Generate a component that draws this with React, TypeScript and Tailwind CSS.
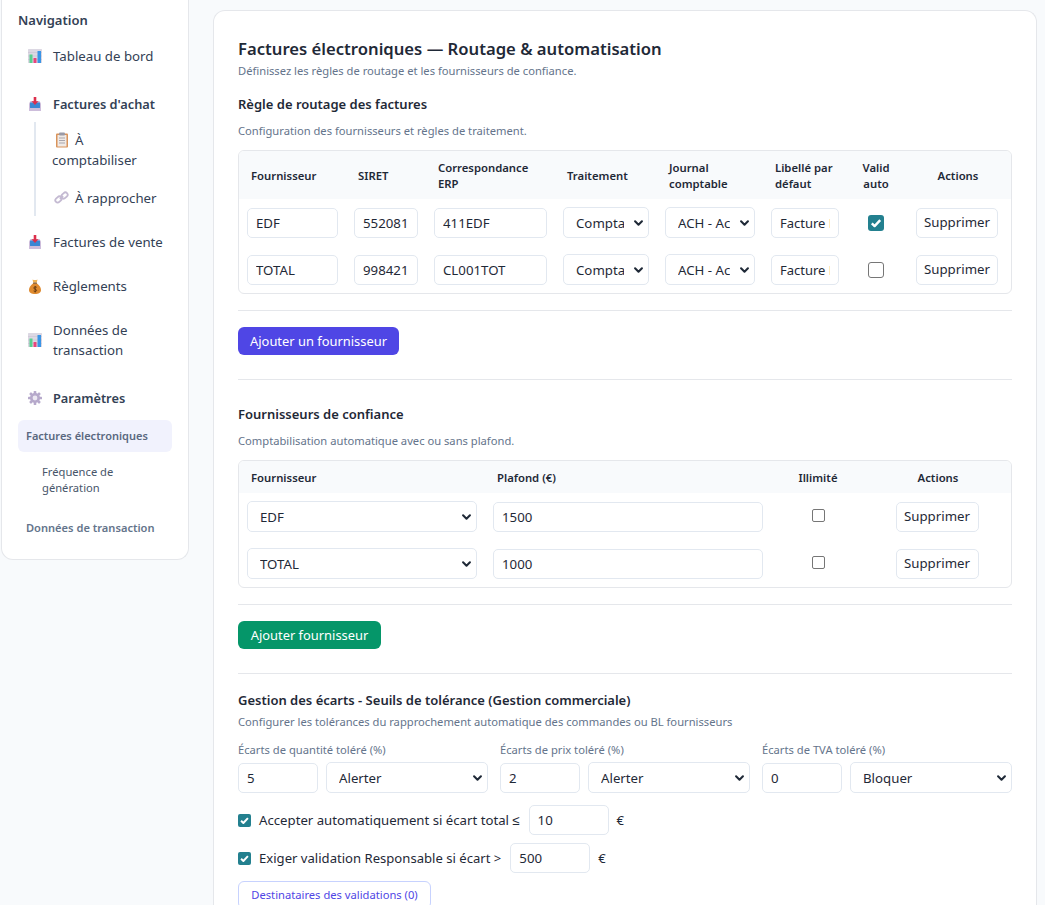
import React from "react";

const F = { fontFamily: "'Noto Sans', 'Liberation Sans', sans-serif" };

function Chev() {
  return (
    <svg className="pointer-events-none absolute right-[4px] top-1/2 -translate-y-1/2 text-[#1f2937]" width="11" height="11" viewBox="0 0 16 16" fill="none">
      <path d="M3 5.500l5 5 5-5" stroke="currentColor" strokeWidth="3" strokeLinecap="round" strokeLinejoin="round" />
    </svg>
  );
}

function Sel({ value, w }: { value: string; w: string }) {
  return (
    <div className={`relative ${w} h-[31px] shrink-0 rounded-[5px] border border-[#e2e8f0] bg-white text-[13.25px] text-[#1f2937]`}>
      <div className="ml-[12px] mr-[24px] h-full overflow-hidden whitespace-nowrap leading-[30px]">{value}</div>
      <Chev />
    </div>
  );
}

function Inp({ value, w, text = "text-[13.25px]" }: { value: string; w: string; text?: string }) {
  return (
    <div className={`${w} ${text} h-[30px] shrink-0 rounded-[5px] border border-[#e2e8f0] bg-white px-[8px] leading-[28px] text-[#1f2937]`}>
      <div className="overflow-hidden whitespace-nowrap">{value}</div>
    </div>
  );
}

function Del({ w }: { w: string }) {
  return (
    <button className={`h-[30px] ${w} rounded-[5px] border border-[#e2e8f0] bg-white pt-px text-center text-[13.25px] text-[#1f2937]`}>Supprimer</button>
  );
}

function Bars() {
  return (
    <svg width="14" height="14" viewBox="0 0 14 14" className="shrink-0">
      <rect width="14" height="14" rx="0.5" fill="#dcd8e3" />
      <path d="M0 3.500h14M0 7h14M0 10.500h14" stroke="#c8c3d2" strokeWidth="0.6" />
      <rect x="1.500" y="5.500" width="3" height="8.500" fill="#58d08f" />
      <rect x="5.500" y="9" width="3" height="5" fill="#e8447c" />
      <rect x="9.500" y="2" width="3.500" height="12" fill="#3a95e6" />
    </svg>
  );
}
function Inbox() {
  return (
    <svg width="14" height="14" viewBox="0 0 14 14" className="shrink-0">
      <path d="M1 6.500L2.500 4h9L13 6.500V14H1z" fill="#cdbddb" />
      <rect x="2" y="5.500" width="10" height="5.500" rx="0.5" fill="#3b87d4" />
      <path d="M5.700 0h2.600v4.200h2.200L7 8 3.500 4.200h2.200z" fill="#dc2f4c" />
    </svg>
  );
}
function Bag() {
  return (
    <svg width="14" height="15" viewBox="0 0 14 15" className="shrink-0">
      <path d="M5 4.500C2.500 6.500 1 8.500 1 11c0 2.800 2.500 4 6 4s6-1.200 6-4c0-2.500-1.500-4.500-4-6.500z" fill="#de8a2f" />
      <path d="M4.500 0.500C6 1.200 8 1.200 9.500 0.500L8.800 3.500H5.200z" fill="#f0b556" />
      <rect x="5" y="3.500" width="4" height="1.300" rx="0.500" fill="#7d5226" />
      <path d="M8.700 8.300C8 7.600 5.800 7.600 5.800 9c0 1.500 2.800.9 2.800 2.400 0 1.300-2.300 1.300-3 .5M7.200 7v6.500" fill="none" stroke="#5e3510" strokeWidth="0.9" />
    </svg>
  );
}
function Gear() {
  return (
    <svg width="16" height="16" viewBox="0 0 16 16" className="-ml-px shrink-0">
      <g fill="#b6a9cb">
        <circle cx="8" cy="8" r="5" />
        {[0, 45, 90, 135].map((a) => (
          <rect key={a} x="6.700" y="1" width="2.600" height="14" rx="0.600" transform={`rotate(${a} 8 8)`} />
        ))}
      </g>
      <circle cx="8" cy="8" r="2.400" fill="#ece8f2" />
    </svg>
  );
}
function Clip() {
  return (
    <svg width="14" height="16" viewBox="0 0 14 16" className="inline-block align-[-3px]">
      <rect x="1" y="1.500" width="12" height="14" rx="1" fill="#d9935a" />
      <rect x="2.500" y="3" width="9" height="11.500" fill="#f0eae6" />
      <rect x="4" y="0.500" width="6" height="3" rx="1" fill="#9a9aa6" />
      <path d="M4 6h6M4 8.500h6M4 11h6" stroke="#a9a6ad" strokeWidth="1" />
    </svg>
  );
}
function LinkIco() {
  return (
    <svg width="15" height="15" viewBox="0 0 15 15" fill="none" className="inline-block align-[-2px]">
      <path d="M6 9l3-3" stroke="#c4bad2" strokeWidth="2" />
      <rect x="1" y="7.200" width="7" height="4.600" rx="2.300" transform="rotate(-45 4.500 9.500)" stroke="#c4bad2" strokeWidth="1.800" />
      <rect x="7" y="3.200" width="7" height="4.600" rx="2.300" transform="rotate(-45 10.500 5.500)" stroke="#c4bad2" strokeWidth="1.800" />
    </svg>
  );
}

function NavItem({ icon, label, bold, cls = "" }: { icon: React.ReactNode; label: string; bold?: boolean; cls?: string }) {
  return (
    <div className={`flex items-center py-2 pl-[10px] pr-2 leading-5 text-[#334155] ${bold ? "text-[12.8px] font-semibold" : "text-[13.25px]"} ${cls}`}>
      <span className="flex w-[25px] shrink-0">{icon}</span>
      <span>{label}</span>
    </div>
  );
}

function Check({ on, size = "h-[16px] w-[16px]", radius = "rounded-[3px]", cls = "" }: { on: boolean; size?: string; radius?: string; cls?: string }) {
  return on ? (
    <span className={`flex ${size} ${radius} ${cls} shrink-0 items-center justify-center bg-[#23808f]`}>
      <svg viewBox="0 0 16 16" className="h-full w-full" fill="none">
        <path d="M3.800 8.300l2.800 2.800 5.600-6" stroke="white" strokeWidth="2.400" strokeLinejoin="round" />
      </svg>
    </span>
  ) : (
    <span className={`block ${size} ${radius} ${cls} shrink-0 border border-[#767676] bg-white`} />
  );
}

const th = "h-[48px] bg-[#f8fafc] px-[12px] pt-[2px] text-left align-middle text-[11.3px] font-semibold leading-4 text-[#1f2937]";
const td = "h-[47px] px-[8px] align-middle";

function Hr() {
  return <div className="h-px bg-[#e5e7eb]" />;
}

function H({ children }: { children: React.ReactNode }) {
  return <div className="text-[13px] font-semibold leading-5 text-[#1f2937]">{children}</div>;
}
function D({ children }: { children: React.ReactNode }) {
  return <div className="text-[11.2px] leading-4 text-[#64748b]">{children}</div>;
}

export default function App() {
  const rows = [
    ["EDF", "552081", "411EDF", true],
    ["TOTAL", "998421", "CL001TOT", false],
  ] as const;
  return (
    <div style={F} className="flex h-[905px] items-start overflow-hidden bg-[#f8fafc] pl-px">
      <aside className="w-[188px] shrink-0 rounded-b-xl border border-t-0 border-[#e5e7eb] bg-white pb-[23px] pl-[16px] pr-[15px] pt-[10px]">
        <div className="mb-2 text-[13px] font-semibold leading-5 text-[#334155]">Navigation</div>
        <NavItem icon={<Bars />} label="Tableau de bord" />
        <NavItem icon={<Inbox />} label="Factures d'achat" bold cls="mt-3" />
        <div className="ml-[16px] border-l-2 border-[#e2e8f0] pl-[16px] pr-2">
          <div className="py-2 text-[13.25px] leading-5 text-[#334155]">
            <span className="ml-[3px] mr-[6px]"><Clip /></span>À comptabiliser
          </div>
          <div className="mt-0.5 py-2 text-[13.25px] leading-5 text-[#334155]">
            <span className="ml-[2px] mr-[6px]"><LinkIco /></span>À rapprocher
          </div>
        </div>
        <NavItem icon={<Inbox />} label="Factures de vente" cls="mt-2" />
        <NavItem icon={<Bag />} label="Règlements" cls="mt-2" />
        <NavItem icon={<Bars />} label="Données de transaction" cls="mt-2" />
        <NavItem icon={<Gear />} label="Paramètres" bold cls="mt-3" />
        <div className="mr-px mt-1 flex h-[32px] items-center rounded-md bg-[#f1f2fd] px-2 text-[11px] font-semibold text-[#5a6880]">Factures électroniques</div>
        <div className="mt-3 pl-[24px] pr-2 text-[11.2px] leading-4 text-[#475569]">Fréquence de génération</div>
        <div className="mt-[24px] flex h-4 items-center px-2 text-[11.1px] font-semibold text-[#64748b]">Données de transaction</div>
      </aside>

      <main className="ml-[24px] mt-[10px] w-[824px] shrink-0 rounded-t-xl border border-b-0 border-[#e5e7eb] bg-white px-[24px] pt-[26px]">
        <div className="text-[16.65px] font-semibold leading-6 text-[#1f2937]">Factures électroniques — Routage &amp; automatisation</div>
        <div className="mt-[2px] text-[11.2px] leading-4 text-[#64748b]">Définissez les règles de routage et les fournisseurs de confiance.</div>

        <div className="mt-[15px]"><H>Règle de routage des factures</H></div>
        <div className="mt-[9px]"><D>Configuration des fournisseurs et règles de traitement.</D></div>

        <div className="mt-[11px] overflow-hidden rounded-md border border-[#e5e7eb]">
          <table className="w-full table-fixed border-collapse">
            <colgroup>
              <col className="w-[107px]" />
              <col className="w-[80px]" />
              <col className="w-[129px]" />
              <col className="w-[102px]" />
              <col className="w-[106px]" />
              <col className="w-[84px]" />
              <col className="w-[58px]" />
              <col />
            </colgroup>
            <thead>
              <tr>
                <th className={th}>Fournisseur</th>
                <th className={th}>SIRET</th>
                <th className={th}>Correspondance ERP</th>
                <th className={th}>Traitement</th>
                <th className={th}>Journal comptable</th>
                <th className={th}>Libellé par défaut</th>
                <th className={`${th} !px-2 !text-center`}>Valid auto</th>
                <th className={`${th} !text-center`}>Actions</th>
              </tr>
            </thead>
            <tbody>
              {rows.map((r) => (
                <tr key={r[0]}>
                  <td className={td}><Inp value={r[0]} w="w-full" /></td>
                  <td className={td}><Inp value={r[1]} w="w-full" /></td>
                  <td className={td}><Inp value={r[2]} w="w-full" /></td>
                  <td className={td}><Sel value="Comptabiliser" w="w-full" /></td>
                  <td className={td}><Sel value="ACH - Achats" w="w-full" /></td>
                  <td className={td}><Inp value="Facture EDF" w="w-full" text="text-[13px]" /></td>
                  <td className={td}><div className="flex justify-center"><Check on={r[3]} /></div></td>
                  <td className={td}><div className="flex justify-center pr-[2px]"><Del w="w-[82px]" /></div></td>
                </tr>
              ))}
            </tbody>
          </table>
        </div>

        <div className="mt-4"><Hr /></div>
        <button className="mt-4 block h-[28px] w-[161px] rounded-md bg-[#4f46e5] pt-px text-[12.9px] text-white">Ajouter un fournisseur</button>
        <div className="mt-6"><Hr /></div>

        <div className="mt-6"><H>Fournisseurs de confiance</H></div>
        <div className="mt-[9px]"><D>Comptabilisation automatique avec ou sans plafond.</D></div>

        <div className="mt-[11px] overflow-hidden rounded-md border border-[#e5e7eb]">
          <table className="w-full table-fixed border-collapse">
            <colgroup>
              <col className="w-[246px]" />
              <col className="w-[286px]" />
              <col className="w-[94px]" />
              <col />
            </colgroup>
            <thead>
              <tr>
                <th className={`${th} !h-[32px]`}>Fournisseur</th>
                <th className={`${th} !h-[32px]`}>Plafond (€)</th>
                <th className={`${th} !h-[32px] !text-center`}>Illimité</th>
                <th className={`${th} !h-[32px] !text-center`}>Actions</th>
              </tr>
            </thead>
            <tbody>
              {[["EDF", "1500"], ["TOTAL", "1000"]].map((r) => (
                <tr key={r[0]}>
                  <td className={td}><Sel value={r[0]} w="w-full" /></td>
                  <td className={td}><Inp value={r[1]} w="w-full" /></td>
                  <td className={td}><div className="flex justify-center"><Check on={false} size="h-[13px] w-[13px]" radius="rounded-[2px]" cls="mb-[3px]" /></div></td>
                  <td className={td}><div className="flex justify-center pr-[2px]"><Del w="w-[83px]" /></div></td>
                </tr>
              ))}
            </tbody>
          </table>
        </div>

        <div className="mt-4"><Hr /></div>
        <button className="mt-4 block h-[28px] w-[143px] rounded-md bg-[#059669] pt-px text-[12.9px] text-white">Ajouter fournisseur</button>
        <div className="mt-6"><Hr /></div>

        <div className="mt-[16px]"><H>Gestion des écarts - Seuils de tolérance (Gestion commerciale)</H></div>
        <div className="mt-[4px]"><D>Configurer les tolérances du rapprochement automatique des commandes ou BL fournisseurs</D></div>

        <div className="mt-[12px] grid grid-cols-3 gap-3">
          {[
            ["Écarts de quantité toléré (%)", "5", "Alerter"],
            ["Écarts de prix toléré (%)", "2", "Alerter"],
            ["Écarts de TVA toléré (%)", "0", "Bloquer"],
          ].map((c) => (
            <div key={c[0]}>
              <div className="mb-[4px] text-[11.2px] leading-4 text-[#64748b]">{c[0]}</div>
              <div className="flex items-center gap-2">
                <Inp value={c[1]} w="w-[80px]" />
                <Sel value={c[2]} w="flex-1" />
              </div>
            </div>
          ))}
        </div>

        <div className="mt-[12px] flex h-[30px] items-center gap-2 text-[13.2px] text-[#1f2937]">
          <Check on size="h-[13px] w-[13px]" radius="rounded-[2px]" />
          <span className="mr-px pt-px">Accepter automatiquement si écart total ≤</span>
          <Inp value="10" w="w-[80px]" />
          <span className="pt-px">€</span>
        </div>
        <div className="mt-2 flex h-[30px] items-center gap-2 text-[13.1px] text-[#1f2937]">
          <Check on size="h-[13px] w-[13px]" radius="rounded-[2px]" />
          <span className="mr-px pt-px">Exiger validation Responsable si écart &gt;</span>
          <Inp value="500" w="w-[80px]" />
          <span className="pt-px">€</span>
        </div>
        <button className="mt-2 block h-[28px] w-[193px] rounded-md border border-[#c7d2fe] bg-white text-[11.2px] text-[#4f46e5]">Destinataires des validations (0)</button>
      </main>
    </div>
  );
}
